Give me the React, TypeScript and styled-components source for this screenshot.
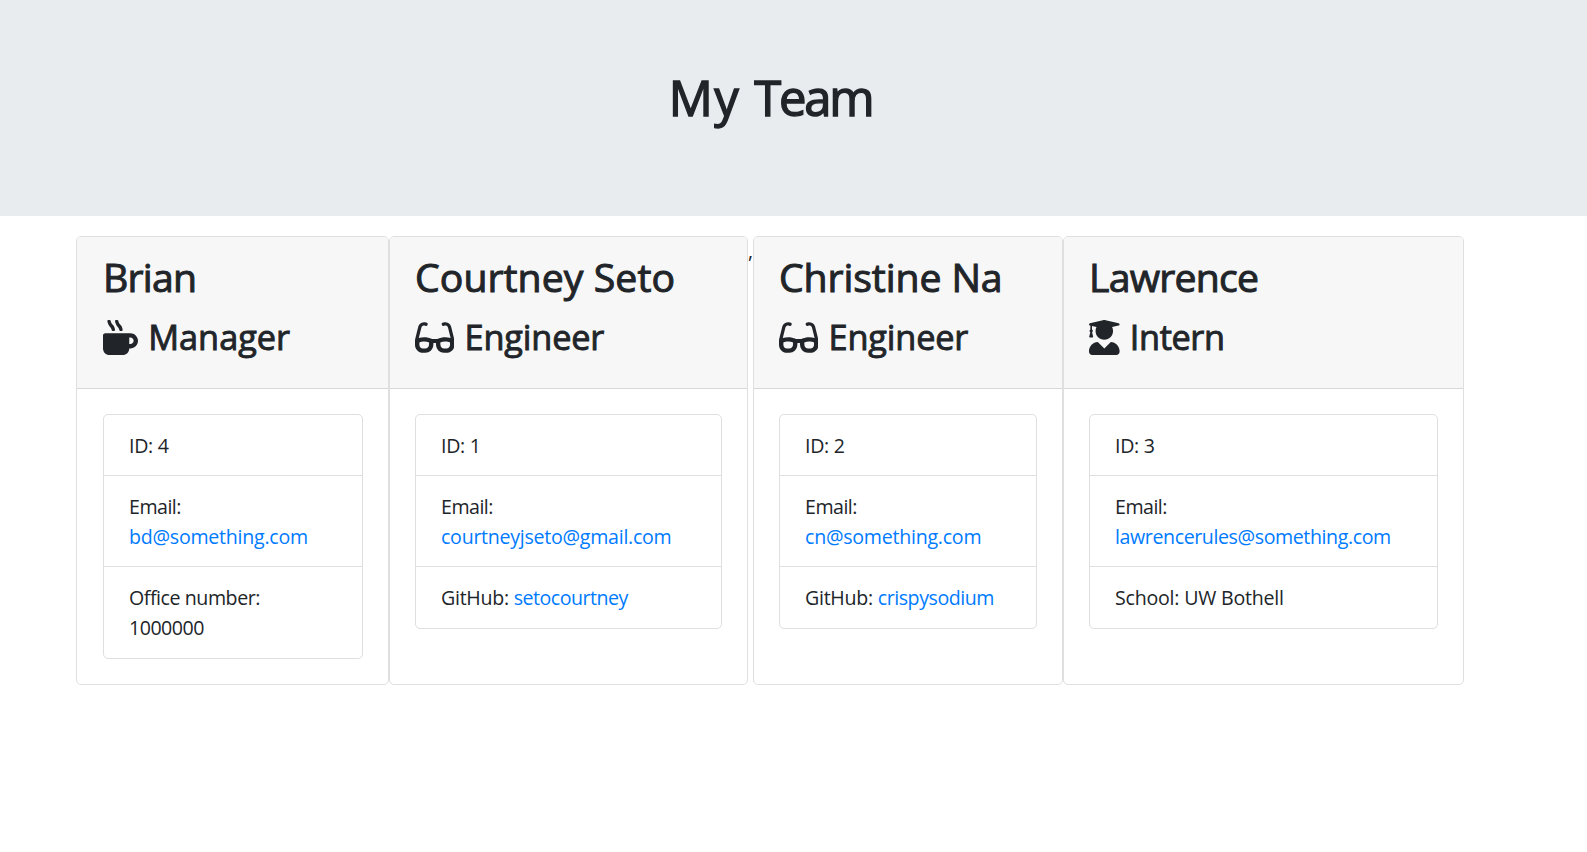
import React from "react";
import styled, { createGlobalStyle } from "styled-components";
import { FaGlasses, FaMugHot, FaUserGraduate } from "react-icons/fa";
import type { IconType } from "react-icons";

const GlobalStyle = createGlobalStyle`
  *, *::before, *::after { box-sizing: border-box; }
  body {
    margin: 0;
    background: #fff;
    color: #212529;
    font-family: "Open Sans", "Noto Sans", sans-serif;
    font-size: 19.6px;
    line-height: 30px;
  }
`;

const Jumbotron = styled.header`
  height: 216px;
  padding: 67px 46px 0 0;
  background: #e8ecef;
  text-align: center;
`;

const Title = styled.h1`
  margin: 0;
  font-size: 49px;
  font-weight: 400;
  line-height: 60px;
  -webkit-text-stroke: 1.4px currentColor;
`;

const Team = styled.main`
  display: flex;
  align-items: stretch;
  height: 449px;
  margin: 20px 0 0 76px;
`;

const Separator = styled.span`
  width: 5px;
`;

const Card = styled.section<{ $width: number; $inset: number }>`
  display: flex;
  flex-direction: column;
  flex: none;
  width: ${(p) => p.$width}px;
  border: 1px solid #dfdfdf;
  border-radius: 5px;
  --inset: ${(p) => p.$inset}px;
`;

const CardHeader = styled.div`
  height: 152px;
  padding: 15px 25px 0 var(--inset);
  background: #f7f7f7;
  border-bottom: 1px solid #d8d8d8;
  border-radius: 4px 4px 0 0;
`;

const Name = styled.h2<{ $spacing: number }>`
  margin: 0 0 10px;
  font-size: 39.2px;
  font-weight: 400;
  line-height: 50px;
  letter-spacing: ${(p) => p.$spacing}px;
  -webkit-text-stroke: 1px currentColor;
`;

const Role = styled.h3<{ $spacing: number; $iconWidth: number }>`
  display: flex;
  align-items: center;
  gap: 10.2px;
  margin: 0;
  font-size: 34.3px;
  font-weight: 400;
  line-height: 50px;
  letter-spacing: ${(p) => p.$spacing}px;
  white-space: nowrap;

  svg {
    flex: none;
    width: ${(p) => p.$iconWidth}px;
    height: 35px;
  }

  span {
    -webkit-text-stroke: 0.9px currentColor;
  }
`;

const CardBody = styled.div`
  padding: 25px 25px 25px var(--inset);
`;

const Details = styled.ul`
  margin: 0;
  padding: 0;
  list-style: none;
  border: 1px solid #dfdfdf;
  border-radius: 5px;
`;

const Detail = styled.li`
  padding: 16px 0 14px 25px;
  white-space: nowrap;

  & + & {
    border-top: 1px solid #dfdfdf;
  }

  &:last-child {
    padding-bottom: 15px;
  }
`;

const Text = styled.span<{ $spacing: number; $block?: boolean }>`
  display: ${(p) => (p.$block ? "block" : "inline")};
  letter-spacing: ${(p) => p.$spacing}px;
`;

const Link = styled.a<{ $spacing: number; $block?: boolean }>`
  display: ${(p) => (p.$block ? "block" : "inline")};
  color: #007bff;
  text-decoration: none;
  letter-spacing: ${(p) => p.$spacing}px;
`;

type Spaced = [text: string, spacing: number];

interface MemberProps {
  width: number;
  inset?: number;
  name: Spaced;
  role: Spaced;
  icon: IconType;
  iconWidth: number;
  id: number;
  email: Spaced;
  children: React.ReactNode;
}

function Member({ width, inset = 25, name, role, icon: Icon, iconWidth, id, email, children }: MemberProps) {
  return (
    <Card $width={width} $inset={inset}>
      <CardHeader>
        <Name $spacing={name[1]}>{name[0]}</Name>
        <Role $spacing={role[1]} $iconWidth={iconWidth}>
          <Icon />
          <span>{role[0]}</span>
        </Role>
      </CardHeader>
      <CardBody>
        <Details>
          <Detail>
            <Text $spacing={-0.3}>ID: {id}</Text>
          </Detail>
          <Detail>
            <Text $spacing={-0.5} $block>Email:</Text>
            <Link href={`mailto:${email[0]}`} $spacing={email[1]} $block>{email[0]}</Link>
          </Detail>
          <Detail>{children}</Detail>
        </Details>
      </CardBody>
    </Card>
  );
}

function GitHub({ user }: { user: Spaced }) {
  return (
    <>
      <Text $spacing={-0.27}>GitHub: </Text>
      <Link href={`https://github.com/${user[0]}`} $spacing={user[1]}>{user[0]}</Link>
    </>
  );
}

export default function App() {
  return (
    <>
      <GlobalStyle />
      <Jumbotron>
        <Title>
          <Text $spacing={1.4}>My </Text>
          <Text $spacing={-2.3}>Team</Text>
        </Title>
      </Jumbotron>
      <Team>
        <Member width={313} inset={26} name={["Brian", -0.78]} role={["Manager", 0]} icon={FaMugHot} iconWidth={35}
          id={4} email={["bd@something.com", -0.25]}>
          <Text $spacing={-0.44} $block>Office number:</Text>
          <Text $spacing={-0.5} $block>1000000</Text>
        </Member>
        <Member width={359} name={["Courtney Seto", 0.07]} role={["Engineer", -0.17]} icon={FaGlasses} iconWidth={39.4}
          id={1} email={["courtneyjseto@gmail.com", -0.27]}>
          <GitHub user={["setocourtney", -0.5]} />
        </Member>
        <Separator>,</Separator>
        <Member width={310} name={["Christine Na", -0.1]} role={["Engineer", -0.17]} icon={FaGlasses} iconWidth={39.4}
          id={2} email={["cn@something.com", -0.25]}>
          <GitHub user={["crispysodium", -0.45]} />
        </Member>
        <Member width={401} name={["Lawrence", -0.79]} role={["Intern", -0.38]} icon={FaUserGraduate} iconWidth={30.6}
          id={3} email={["lawrencerules@something.com", -0.4]}>
          <Text $spacing={-0.22}>School: UW Bothell</Text>
        </Member>
      </Team>
    </>
  );
}
